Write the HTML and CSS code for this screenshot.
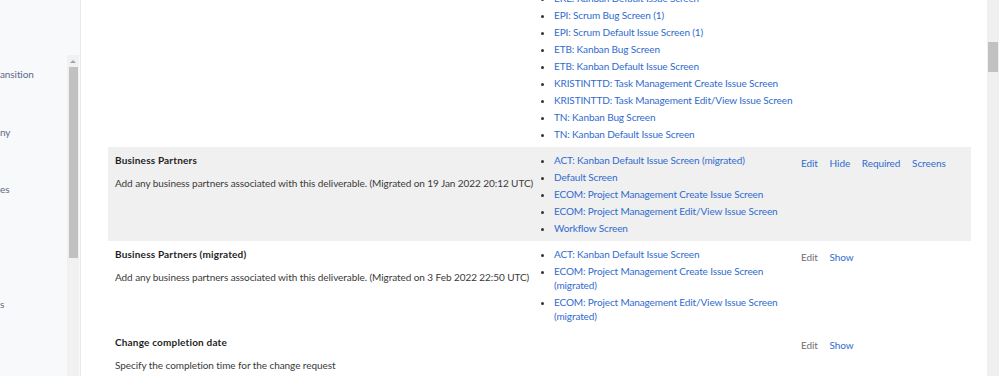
FILE: index.html
```html
<!DOCTYPE html>
<html lang="en">
<head>
<meta charset="utf-8">
<title>Custom fields</title>
<link rel="stylesheet" href="styles.css">
</head>
<body>
<div class="app">
  <aside class="sidebar">
    <div class="sidebar-head"></div>
    <div class="sidebar-scroll">
      <ul class="nav">
        <li>ansition</li>
        <li>ny</li>
        <li>es</li>
        <li></li>
        <li>s</li>
      </ul>
      <div class="vscroll">
        <span class="vscroll-arrow"></span>
        <span class="vscroll-thumb"></span>
      </div>
    </div>
  </aside>

  <main class="main">
    <table class="fields">
      <colgroup>
        <col class="col-name">
        <col class="col-screens">
        <col class="col-ops">
      </colgroup>
      <tbody>
        <tr>
          <td class="name-cell">
            <div class="field-title">Brand</div>
            <p class="field-desc">The brand associated with this deliverable.</p>
          </td>
          <td class="screens-cell">
            <ul class="screens">
              <li><a href="#">ACT: Kanban Bug Screen</a></li>
              <li><a href="#">ACT: Kanban Default Issue Screen</a></li>
              <li><a href="#">EKE: Kanban Bug Screen</a></li>
              <li><a href="#">EKE: Kanban Default Issue Screen</a></li>
              <li><a href="#">EPI: Scrum Bug Screen (1)</a></li>
              <li><a href="#">EPI: Scrum Default Issue Screen (1)</a></li>
              <li><a href="#">ETB: Kanban Bug Screen</a></li>
              <li><a href="#">ETB: Kanban Default Issue Screen</a></li>
              <li><a href="#">KRISTINTTD: Task Management Create Issue Screen</a></li>
              <li><a href="#">KRISTINTTD: Task Management Edit/View Issue Screen</a></li>
              <li><a href="#">TN: Kanban Bug Screen</a></li>
              <li><a href="#">TN: Kanban Default Issue Screen</a></li>
            </ul>
          </td>
          <td class="ops-cell">
            <a href="#">Edit</a><a href="#">Hide</a><a href="#">Required</a><a href="#">Screens</a>
          </td>
        </tr>
        <tr class="row-active">
          <td class="name-cell">
            <div class="field-title">Business Partners</div>
            <p class="field-desc">Add any business partners associated with this deliverable. (Migrated on 19 Jan 2022 20:12 UTC)</p>
          </td>
          <td class="screens-cell">
            <ul class="screens">
              <li><a href="#">ACT: Kanban Default Issue Screen (migrated)</a></li>
              <li><a href="#">Default Screen</a></li>
              <li><a href="#">ECOM: Project Management Create Issue Screen</a></li>
              <li><a href="#">ECOM: Project Management Edit/View Issue Screen</a></li>
              <li><a href="#">Workflow Screen</a></li>
            </ul>
          </td>
          <td class="ops-cell">
            <a href="#">Edit</a><a href="#">Hide</a><a href="#">Required</a><a href="#">Screens</a>
          </td>
        </tr>
        <tr>
          <td class="name-cell">
            <div class="field-title">Business Partners (migrated)</div>
            <p class="field-desc">Add any business partners associated with this deliverable. (Migrated on 3 Feb 2022 22:50 UTC)</p>
          </td>
          <td class="screens-cell">
            <ul class="screens">
              <li><a href="#">ACT: Kanban Default Issue Screen</a></li>
              <li><a href="#">ECOM: Project Management Create Issue Screen (migrated)</a></li>
              <li><a href="#">ECOM: Project Management Edit/View Issue Screen (migrated)</a></li>
            </ul>
          </td>
          <td class="ops-cell">
            <span class="op-muted">Edit</span><a href="#">Show</a>
          </td>
        </tr>
        <tr>
          <td class="name-cell">
            <div class="field-title">Change completion date</div>
            <p class="field-desc">Specify the completion time for the change request</p>
          </td>
          <td class="screens-cell"></td>
          <td class="ops-cell">
            <span class="op-muted">Edit</span><a href="#">Show</a>
          </td>
        </tr>
      </tbody>
    </table>
  </main>

  <div class="page-scroll">
    <span class="page-scroll-thumb"></span>
  </div>
</div>
</body>
</html>
```

FILE: styles.css
```css
* {
  box-sizing: border-box;
}

html,
body {
  margin: 0;
  height: 100%;
}

body {
  font-family: Lato, "Open Sans", sans-serif;
  font-size: 10px;
  letter-spacing: -0.07px;
  color: #3a3a3a;
  background: #ffffff;
  overflow: hidden;
}

a {
  color: #2f6bce;
  text-decoration: none;
}

.app {
  display: flex;
  height: 376px;
}

/* ---------- sidebar ---------- */
.sidebar {
  width: 81px;
  flex: none;
  display: flex;
  flex-direction: column;
  background: #f8f9fb;
  border-right: 1px solid #e8eaee;
}

.sidebar-head {
  height: 55px;
  flex: none;
}

.sidebar-scroll {
  flex: 1;
  min-height: 0;
  display: flex;
  padding-right: 1px;
}

.nav {
  flex: 1;
  min-width: 0;
  margin: 0;
  padding: 12px 0 0;
  list-style: none;
  overflow: hidden;
  white-space: nowrap;
  color: #5b6b86;
  font-size: 10px;
  letter-spacing: -0.1px;
}

.nav li {
  height: 57.5px;
  line-height: 14px;
}

.vscroll {
  width: 12px;
  flex: none;
  display: flex;
  flex-direction: column;
  background: #f1f1f1;
}

.vscroll-arrow {
  height: 12px;
  display: flex;
  align-items: center;
  justify-content: center;
}

.vscroll-arrow::before {
  content: "";
  border-left: 3px solid transparent;
  border-right: 3px solid transparent;
  border-bottom: 3px solid #a3a3a3;
}

.vscroll-thumb {
  height: 191px;
  margin: 0 1px 0 2px;
  background: #c1c1c1;
}

/* ---------- main ---------- */
.main {
  flex: 1;
  min-width: 0;
  overflow: hidden;
  padding: 0 16px 0 27px;
}

.fields {
  width: 863px;
  margin-top: -66.5px;
  border-collapse: collapse;
  table-layout: fixed;
}

.col-name {
  width: 432px;
}

.col-screens {
  width: 258px;
}

.col-ops {
  width: 173px;
}

.fields td {
  vertical-align: top;
  padding: 6.5px 7px 5.5px;
}

.fields td.name-cell {
  padding-right: 0;
}

.row-active td {
  background: #f0f0f0;
}

.field-title {
  font-weight: 700;
  line-height: 14px;
  letter-spacing: 0.18px;
  color: #1f1f1f;
}

.field-desc {
  margin: 9px 0 0;
  line-height: 14px;
}

.fields td.screens-cell {
  padding-left: 0;
  padding-right: 0;
}

.screens {
  margin: 0;
  padding-left: 14px;
  color: #333;
  letter-spacing: -0.12px;
}

.screens li {
  line-height: 14px;
}

.screens li + li {
  margin-top: 3px;
}

.fields td.ops-cell {
  padding-top: 10px;
  padding-left: 3px;
  white-space: nowrap;
}

.ops-cell a,
.ops-cell .op-muted {
  margin-right: 11.7px;
}

.op-muted {
  color: #707070;
}

/* ---------- page scrollbar ---------- */
.page-scroll {
  width: 12px;
  flex: none;
  display: flex;
  flex-direction: column;
  padding-top: 42px;
  background: #f0f0f0;
}

.page-scroll-thumb {
  height: 30px;
  margin: 0 1px;
  background: #c1c1c1;
}
```
